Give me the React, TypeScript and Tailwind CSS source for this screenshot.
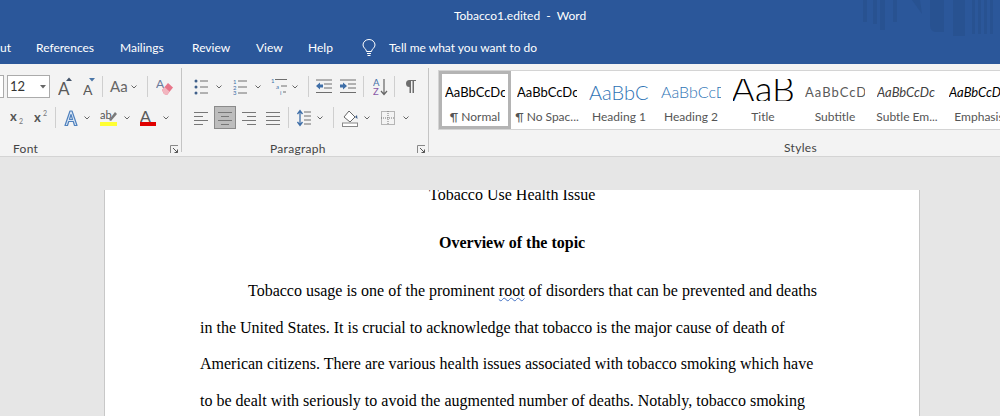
import React from "react";

const C = "#5a5a5a";
const B = "#44546a";

function Chev({ ml }: { ml: string }) {
  return (
    <svg width="6" height="4" viewBox="0 0 6 4" className={`${ml} shrink-0`}>
      <path d="M0.5 0.5 L3 3 L5.5 0.5" fill="none" stroke="#666" strokeWidth="1" />
    </svg>
  );
}

function Sep({ ml }: { ml: string }) {
  return <div className={`${ml} w-px h-[21px] bg-[#cfcfcf] shrink-0`} />;
}

function Lines({ w = 14, rows }: { w?: number; rows: [number, number][] }) {
  const gap = 12 / (rows.length - 1 || 1);
  return (
    <svg width={w} height="14" viewBox={`0 0 ${w} 14`} className="shrink-0">
      {rows.map(([a, b], i) => (
        <rect key={i} x={a} y={1 + i * gap} width={b - a} height="1" fill="#777" />
      ))}
    </svg>
  );
}

function Launcher() {
  return (
    <svg width="9" height="9" viewBox="0 0 9 9" className="shrink-0">
      <path d="M0.5 8 V0.5 H8" fill="none" stroke="#888" />
      <path d="M3 3 L7.5 7.5 M7.5 4.5 V7.5 H4.5" fill="none" stroke="#555" />
    </svg>
  );
}

function GlyphA({ size, color = C, top = 18 }: { size: number; color?: string; top?: number }) {
  return (
    <text x="0" y={top} fontSize={size} fill={color} fontFamily="Lato, sans-serif">
      A
    </text>
  );
}

const STYLES = [
  { p: "AaBbCcDc", l: "¶ Normal", c: "text-[13px] text-black", sel: true },
  { p: "AaBbCcDc", l: "¶ No Spac...", c: "text-[13px] text-black" },
  { p: "AaBbCc", l: "Heading 1", c: "text-[20px] font-light text-[#2e74b5]" },
  { p: "AaBbCcD", l: "Heading 2", c: "text-[16px] font-light text-[#2e74b5]" },
  { p: "AaB", l: "Title", c: "text-[36px] font-light text-black", title: true },
  { p: "AaBbCcD", l: "Subtitle", c: "text-[13px] text-[#5a5a5a] tracking-[1px]" },
  { p: "AaBbCcDc", l: "Subtle Em...", c: "text-[13px] italic text-[#404040]" },
  { p: "AaBbCcDc", l: "Emphasis", c: "text-[13px] italic text-black" },
];

export default function App() {
  return (
    <div className="w-[1000px] h-[416px] overflow-hidden bg-[#e6e6e6] flex flex-col font-['Lato',sans-serif]">
      {/* Title bar */}
      <header className="relative h-[64px] bg-[#2b579a] text-white shrink-0 overflow-hidden">
        <svg width="140" height="38" viewBox="0 0 140 38" className="absolute left-[860px] top-0">
          <g fill="#285291">
            <rect x="3" y="0" width="4" height="22" />
            <rect x="13" y="0" width="4" height="24" />
            <rect x="20" y="0" width="5" height="30" />
            <rect x="33" y="0" width="4" height="22" />
            <path d="M52 0 L60 0 L62 14 Z" />
            <path d="M70 0 H84 V32 H76 Q70 32 70 24 Z" />
            <rect x="93" y="0" width="12" height="36" />
            <rect x="112" y="0" width="3" height="34" />
            <rect x="118" y="0" width="3" height="34" />
            <rect x="124" y="0" width="3" height="34" />
            <rect x="130" y="0" width="3" height="34" />
          </g>
        </svg>
        <div className="relative h-[32px] pl-[40px] flex items-center justify-center text-[12px]">
          <span className="whitespace-pre">Tobacco1.edited  -  Word</span>
        </div>
        <nav className="h-[32px] flex items-center text-[12px] whitespace-nowrap">
          <span className="w-[9px] shrink-0">ut</span>
          <span className="ml-[27px] w-[57px] shrink-0">References</span>
          <span className="ml-[27px] w-[45px] shrink-0">Mailings</span>
          <span className="ml-[27px] w-[37px] shrink-0">Review</span>
          <span className="ml-[27px] w-[25px] shrink-0">View</span>
          <span className="ml-[27px] w-[25px] shrink-0">Help</span>
          <svg width="14" height="18" viewBox="0 0 14 18" className="ml-[29px] shrink-0">
            <path d="M4.5 12.5 C4.5 10 1 9 1 6 A6 5.5 0 0 1 13 6 C13 9 9.5 10 9.5 12.5 Z" fill="none" stroke="#fff" strokeWidth="1" />
            <path d="M5 14.5 H9 M5.5 16.5 H8.5" stroke="#fff" strokeWidth="1" />
          </svg>
          <span className="ml-[13px]">Tell me what you want to do</span>
        </nav>
      </header>

      {/* Ribbon */}
      <div className="h-[93px] shrink-0 flex bg-[#f3f3f3] border-b border-[#d4d4d4] overflow-hidden">
        {/* Font */}
        <section className="w-[182px] shrink-0 mt-[4px] h-[84px] border-r border-[#c4c4c4] flex flex-col">
          <div className="mt-[7px] h-[23px] shrink-0 flex items-center">
            <div className="-ml-[10px] w-[14px] h-[23px] shrink-0 border border-[#ababab] bg-white" />
            <div className="ml-[3px] w-[43px] h-[23px] shrink-0 border border-[#ababab] bg-white flex items-center pl-[2px] text-[13px] text-[#333]">
              <span className="w-[30px]">12</span>
              <svg width="6" height="4" viewBox="0 0 6 4">
                <path d="M0 0 H6 L3 3.5 Z" fill="#666" />
              </svg>
            </div>
            <svg width="15" height="20" viewBox="0 0 15 20" className="ml-[8px] shrink-0">
              <GlyphA size={17} top={18} />
              <path d="M8 4 L11 0.5 L14 4 Z" fill={B} />
            </svg>
            <svg width="12" height="20" viewBox="0 0 12 20" className="ml-[10px] shrink-0">
              <GlyphA size={14} top={18} />
              <path d="M6 1 L12 1 L9 4.5 Z" fill="#4a76a8" />
            </svg>
            <Sep ml="ml-[7px]" />
            <span className="ml-[7px] w-[17px] text-[15px] text-[#666] shrink-0">Aa</span>
            <Chev ml="ml-[4px]" />
            <Sep ml="ml-[10px]" />
            <svg width="17" height="18" viewBox="0 0 17 18" className="ml-[8px] shrink-0">
              <text x="0" y="10" fontSize="12" fill="#6a7a9a" fontFamily="Lato, sans-serif">A</text>
              <path d="M6 12 L12 5 L17 9.5 L11 17 L8 16 Z" fill="#e8768a" />
              <path d="M6 12 L8.5 9 L13.5 13.5 L11 17 L8 16 Z" fill="#f2b5bf" />
            </svg>
          </div>
          <div className="mt-[8px] h-[23px] shrink-0 flex items-center">
            <svg width="14" height="16" viewBox="0 0 14 16" className="ml-[10px] shrink-0">
              <text x="0" y="11" fontSize="13" fontWeight="700" fill="#555" fontFamily="Lato, sans-serif">x</text>
              <text x="9" y="14" fontSize="7" fill="#777" fontFamily="Lato, sans-serif">2</text>
            </svg>
            <svg width="14" height="16" viewBox="0 0 14 16" className="ml-[10px] shrink-0">
              <text x="0" y="12" fontSize="13" fontWeight="700" fill="#555" fontFamily="Lato, sans-serif">x</text>
              <text x="9" y="6" fontSize="7" fill="#777" fontFamily="Lato, sans-serif">2</text>
            </svg>
            <Sep ml="ml-[7px]" />
            <svg width="14" height="18" viewBox="0 0 14 18" className="ml-[8px] shrink-0">
              <path d="M1 16.5 L6 2 H8 L13 16.5 H10.5 L9.3 12.5 H4.7 L3.5 16.5 Z M5.5 10.5 H8.5 L7 5.5 Z" fill="#d9e6f5" stroke="#4f81bd" strokeWidth="1.2" strokeLinejoin="round" />
            </svg>
            <Chev ml="ml-[6px]" />
            <svg width="17" height="18" viewBox="0 0 17 18" className="ml-[10px] shrink-0">
              <text x="0" y="10" fontSize="11" fill="#555" fontFamily="Lato, sans-serif">ab</text>
              <path d="M9 11 L15 3 L17 5 L11 12 Z" fill="#7a7a7a" />
              <rect x="0" y="13" width="17" height="4" fill="#ffff33" />
            </svg>
            <Chev ml="ml-[7px]" />
            <svg width="16" height="18" viewBox="0 0 16 18" className="ml-[10px] shrink-0">
              <GlyphA size={16} top={13} />
              <rect x="0" y="13" width="16" height="4" fill="#e00000" />
            </svg>
            <Chev ml="ml-[7px]" />
          </div>
          <div className="mt-[12px] h-[16px] shrink-0 flex items-center text-[12px] text-[#444] tracking-[0.3px]">
            <span className="ml-[13px] w-[157px]">Font</span>
            <Launcher />
          </div>
        </section>

        {/* Paragraph */}
        <section className="w-[247px] shrink-0 mt-[4px] h-[84px] border-r border-[#c4c4c4] flex flex-col">
          <div className="mt-[7px] h-[23px] shrink-0 flex items-center">
            <svg width="14" height="16" viewBox="0 0 14 16" className="ml-[12px] shrink-0">
              <g fill="#3f5f8a">
                <circle cx="2" cy="2" r="1.5" />
                <circle cx="2" cy="8" r="1.5" />
                <circle cx="2" cy="14" r="1.5" />
              </g>
              <path d="M6 2 H14 M6 8 H14 M6 14 H14" stroke="#6e6e6e" />
            </svg>
            <Chev ml="ml-[8px]" />
            <svg width="14" height="16" viewBox="0 0 14 16" className="ml-[11px] shrink-0">
              <g fontSize="6" fill="#3f6fa8" fontFamily="Lato, sans-serif">
                <text x="0" y="5">1</text>
                <text x="0" y="10.5">2</text>
                <text x="0" y="16">3</text>
              </g>
              <path d="M5 2 H14 M5 8 H14 M5 14 H14" stroke="#6e6e6e" />
            </svg>
            <Chev ml="ml-[8px]" />
            <svg width="16" height="17" viewBox="0 0 16 17" className="ml-[10px] shrink-0">
              <g fontSize="6" fill="#3f6fa8" fontFamily="Lato, sans-serif">
                <text x="0" y="5">1</text>
                <text x="5" y="11">a</text>
                <text x="9" y="17">i</text>
              </g>
              <path d="M4 1.5 H16 M10 8 H16 M12 14 H15" stroke="#6e6e6e" />
            </svg>
            <Chev ml="ml-[5px]" />
            <Sep ml="ml-[10px]" />
            <svg width="16" height="15" viewBox="0 0 16 15" className="ml-[7px] shrink-0">
              <path d="M0 1 H16 M8 5 H16 M8 9 H16 M0 13.5 H16" stroke="#6e6e6e" />
              <path d="M0 7 L4 3.5 V5.5 H7 V8.5 H4 V10.5 Z" fill="#3f6fa8" />
            </svg>
            <svg width="16" height="15" viewBox="0 0 16 15" className="ml-[8px] shrink-0">
              <path d="M0 1 H16 M8 5 H16 M8 9 H16 M0 13.5 H16" stroke="#6e6e6e" />
              <path d="M7 7 L3 3.5 V5.5 H0 V8.5 H3 V10.5 Z" fill="#3f6fa8" />
            </svg>
            <Sep ml="ml-[7px]" />
            <svg width="15" height="18" viewBox="0 0 15 18" className="ml-[9px] shrink-0">
              <text x="0" y="8" fontSize="9.5" fill="#3f6fa8" fontFamily="Lato, sans-serif">A</text>
              <text x="0" y="17" fontSize="9.5" fill="#8a5aa8" fontFamily="Lato, sans-serif">Z</text>
              <path d="M11 1 V16 M8 13 L11 16.5 L14 13" fill="none" stroke="#666" strokeWidth="1.2" />
            </svg>
            <Sep ml="ml-[6px]" />
            <svg width="11" height="15" viewBox="0 0 11 15" className="ml-[10px] shrink-0">
              <path d="M4.5 1 A3.5 3.5 0 0 0 4.5 8 V14 H6 V2 H7.5 V14 H9 V2 H11 V1 Z" fill="#6e6e6e" />
            </svg>
          </div>
          <div className="mt-[8px] h-[23px] shrink-0 flex items-center">
            <div className="ml-[12px] shrink-0 flex">
              <Lines rows={[[0, 14], [0, 9], [0, 14], [0, 9]]} />
            </div>
            <div className="ml-[6px] w-[22px] h-[23px] shrink-0 bg-[#bdbdbd] border border-[#8a8a8a] flex items-center justify-center">
              <Lines rows={[[0, 14], [3, 11], [0, 14], [3, 11]]} />
            </div>
            <div className="ml-[6px] shrink-0 flex">
              <Lines rows={[[0, 14], [5, 14], [0, 14], [5, 14]]} />
            </div>
            <div className="ml-[10px] shrink-0 flex">
              <Lines rows={[[0, 14], [0, 14], [0, 14], [0, 14]]} />
            </div>
            <Sep ml="ml-[8px]" />
            <svg width="14" height="18" viewBox="0 0 14 18" className="ml-[8px] shrink-0">
              <path d="M3 2 V16 M0.5 5 L3 1.5 L5.5 5 M0.5 13 L3 16.5 L5.5 13" fill="none" stroke="#3f6fa8" strokeWidth="1.3" />
              <path d="M7 3 H14 M7 7 H14 M7 11 H14 M7 15 H14" stroke="#6e6e6e" />
            </svg>
            <Chev ml="ml-[6px]" />
            <Sep ml="ml-[10px]" />
            <svg width="16" height="18" viewBox="0 0 16 18" className="ml-[8px] shrink-0">
              <path d="M2 8 L7 2 L13 8 L8 13 Z" fill="#fff" stroke="#666" />
              <path d="M13 8 L15 6 L15.5 10 Z" fill="#3f5f8a" />
              <rect x="0.5" y="14" width="15" height="3.5" fill="#fff" stroke="#888" />
            </svg>
            <Chev ml="ml-[6px]" />
            <svg width="14" height="14" viewBox="0 0 14 14" className="ml-[11px] shrink-0">
              <rect x="0.5" y="0.5" width="13" height="13" fill="none" stroke="#777" strokeDasharray="1 1" />
              <path d="M7 0 V14 M0 7 H14" stroke="#777" strokeDasharray="1 1" />
            </svg>
            <Chev ml="ml-[8px]" />
          </div>
          <div className="mt-[12px] h-[16px] shrink-0 flex items-center text-[12px] text-[#444] tracking-[0.3px]">
            <span className="ml-[88px] w-[147px]">Paragraph</span>
            <Launcher />
          </div>
        </section>

        {/* Styles */}
        <section className="flex-1 min-w-0 flex flex-col">
          <div className="ml-[9px] mt-[6px] w-[700px] h-[60px] shrink-0 flex bg-white border-y border-l border-[#d4d4d4]">
            {STYLES.map((s) => (
              <div
                key={s.l}
                className={`w-[72px] h-[58px] shrink-0 flex flex-col items-center overflow-hidden ${
                  s.sel ? "border-[3px] border-[#b4b4b4]" : "border-[3px] border-white"
                }`}
              >
                <div className="h-[36px] w-[60px] shrink-0 flex flex-col">
                  <div
                    className={`w-[60px] overflow-hidden whitespace-nowrap flex ${
                      s.title ? "mt-[5px] h-[22px] justify-center items-end" : "h-[36px] items-center"
                    }`}
                  >
                    <span className={`${s.c} leading-none ${s.title ? "-mb-[5px]" : ""}`}>{s.p}</span>
                  </div>
                </div>
                <span className="text-[12px] text-[#555] leading-[12px] mt-[1px] whitespace-nowrap">{s.l}</span>
              </div>
            ))}
          </div>
          <div className="mt-[10px] h-[16px] shrink-0 flex items-center text-[12px] text-[#444] tracking-[0.3px] whitespace-nowrap">
            <span className="ml-[355px]">Styles</span>
          </div>
        </section>
      </div>

      {/* Document */}
      <main className="flex-1 min-h-0 overflow-hidden">
        <article className="ml-[104px] mt-[33px] w-[816px] h-[240px] bg-white border-x border-[#c8c8c8] overflow-hidden text-black text-[16px] font-['Liberation_Serif',serif] pl-[95px] whitespace-nowrap">
          <p className="-mt-[19px] leading-[48px] pl-[229px]">Tobacco Use Health Issue</p>
          <p className="leading-[48px] font-bold pl-[239px]">Overview of the topic</p>
          <div className="mt-[6px] leading-[36.5px]">
            <p className="pl-[48px]">
              Tobacco usage is one of the prominent{" "}
              <span className="underline decoration-wavy decoration-[#4472c4] decoration-1 underline-offset-[1px]">root</span> of disorders that can be
              prevented and deaths
            </p>
            <p>in the United States. It is crucial to acknowledge that tobacco is the major cause of death of</p>
            <p>American citizens. There are various health issues associated with tobacco smoking which have</p>
            <p>to be dealt with seriously to avoid the augmented number of deaths. Notably, tobacco smoking</p>
          </div>
        </article>
      </main>
    </div>
  );
}
